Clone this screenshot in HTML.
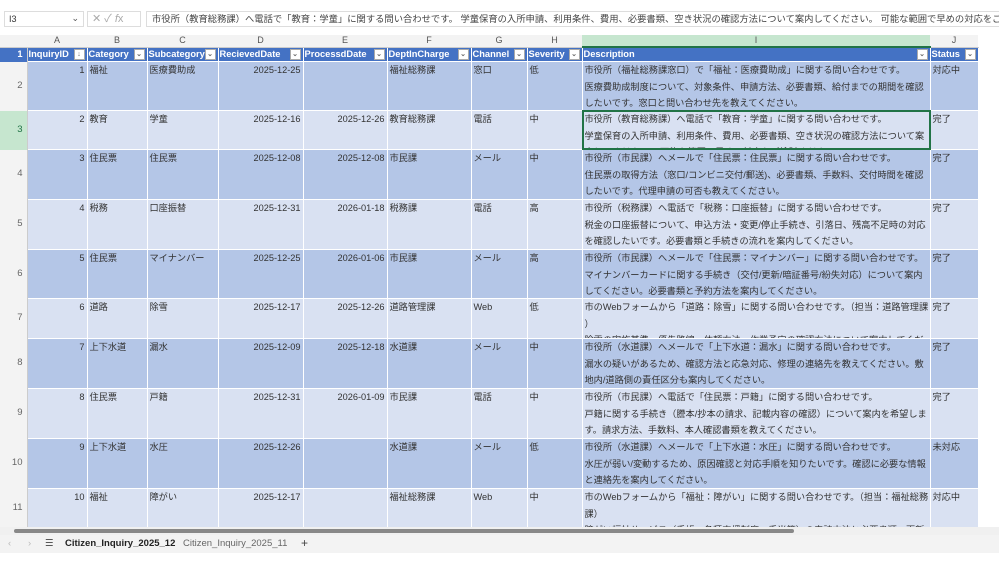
<!DOCTYPE html>
<html><head><meta charset="utf-8"><style>
*{margin:0;padding:0;box-sizing:border-box}
body{width:999px;height:562px;background:#fff;font-family:"Liberation Sans","Noto Sans CJK JP",sans-serif;color:#333;position:relative;overflow:hidden;font-size:9.2px}
.top{position:absolute;left:0;top:0;width:999px;height:34px;background:#fff}
.nb{position:absolute;left:4px;top:11px;width:80px;height:16px;border:1px solid #ddd;font-size:9px;padding:2px 4px}
.nb span{position:absolute;right:4px;top:1px;color:#555}
.fx{position:absolute;left:87px;top:11px;width:54px;height:16px;border:1px solid #ddd;color:#aaa;font-size:11px;padding-left:4px;line-height:14px}
.fb{position:absolute;left:146px;top:11px;width:860px;height:16px;border:1px solid #ddd;font-size:9.3px;padding-left:5px;line-height:14px;white-space:nowrap;overflow:hidden;color:#444}
.grid{position:absolute;left:0;top:35px}
table{border-collapse:collapse;table-layout:fixed;width:999px}
td{border:1px solid #fff;vertical-align:top;padding:0;white-space:nowrap}
td>div{overflow:hidden;padding:0 2px;line-height:16.5px}
.ch td{background:#f3f3f3;color:#555;text-align:center;font-size:9px;padding:0;border:none;border-bottom:1px solid #ccc}
.ch td>div{height:11px;line-height:11px}
.ch td.sel{background:#c6e6cf;border-bottom:2px solid #217346}
td.rh{background:#f3f3f3;color:#666;text-align:right;vertical-align:middle;font-size:9.5px;border:none;border-right:1px solid #ccc}
td.rh>div{display:flex;align-items:center;justify-content:flex-end;padding-right:4px}
.hd td{background:#4472c4;color:#fff;font-weight:bold;position:relative;font-size:9.3px}
.hd td>div{height:13px;line-height:13px;padding-left:1px}
.hd td i{position:absolute;right:2px;top:1px;width:11px;height:11px;background:#fff;border:1px solid #aaa;font-style:normal;color:#666;font-size:7px;line-height:9px;text-align:center}
.d td{background:#b4c6e7}
.l td{background:#d9e1f2}
td.r{text-align:right}
.d td.rh,.l td.rh{background:#f3f3f3}
td.w{background:#fff!important}
.h49>td>div{height:48px}.h50>td>div{height:49px}.h39>td>div{height:38px}.h40>td>div{height:39px}
.selc{position:absolute;left:582px;top:110px;width:349px;height:40px;border:2px solid #217346}
.sb{position:absolute;left:0;top:527px;width:999px;height:8px;background:#f0f0f0}
.sb div{position:absolute;left:14px;top:2px;width:780px;height:4px;background:#888;border-radius:2px}
.tabs{position:absolute;left:0;top:535px;width:999px;height:18px;background:#f3f3f3;font-size:9.5px;color:#444}
.tabs span{position:absolute;top:3px}
.bot{position:absolute;left:0;top:553px;width:999px;height:9px;background:#fff}
</style></head><body>
<div class="top">
<div class="nb">I3<span>⌄</span></div>
<div class="fx">✕ ✓ <i>f</i>x</div>
<div class="fb">市役所（教育総務課）へ電話で「教育：学童」に関する問い合わせです。 学童保育の入所申請、利用条件、費用、必要書類、空き状況の確認方法について案内してください。 可能な範囲で早めの対応をご検討ください。</div>
</div>
<div class="grid">
<table>
<colgroup><col style="width:27px"><col style="width:60px"><col style="width:60px"><col style="width:71px"><col style="width:85px"><col style="width:84px"><col style="width:84px"><col style="width:56px"><col style="width:55px"><col style="width:348px"><col style="width:48px"><col style="width:21px"></colgroup>
<tr class="ch"><td><div></div></td><td><div>A</div></td><td><div>B</div></td><td><div>C</div></td><td><div>D</div></td><td><div>E</div></td><td><div>F</div></td><td><div>G</div></td><td><div>H</div></td><td class="sel"><div>I</div></td><td><div>J</div></td><td style="background:#fff;border:none"><div></div></td></tr>
<tr class="hd"><td class="rh"><div style="height:13px">1</div></td><td><div>InquiryID</div><i>↓</i></td><td><div>Category</div><i>⌄</i></td><td><div>Subcategory</div><i>⌄</i></td><td><div>RecievedDate</div><i>⌄</i></td><td><div>ProcessdDate</div><i>⌄</i></td><td><div>DeptInCharge</div><i>⌄</i></td><td><div>Channel</div><i>⌄</i></td><td><div>Severity</div><i>⌄</i></td><td><div>Description</div><i>⌄</i></td><td><div>Status</div><i>⌄</i></td><td class="w"><div></div></td></tr>
<tr class="d h49"><td class="rh"><div>2</div></td><td class="r"><div>1</div></td><td><div>福祉</div></td><td><div>医療費助成</div></td><td class="r"><div>2025-12-25</div></td><td class="r"><div></div></td><td><div>福祉総務課</div></td><td><div>窓口</div></td><td><div>低</div></td><td><div>市役所（福祉総務課窓口）で「福祉：医療費助成」に関する問い合わせです。<br>医療費助成制度について、対象条件、申請方法、必要書類、給付までの期間を確認<br>したいです。窓口と問い合わせ先を教えてください。</div></td><td><div>対応中</div></td><td class="w"><div></div></td></tr>
<tr class="l h39"><td class="rh" style="background:#c6e6cf;color:#217346"><div>3</div></td><td class="r"><div>2</div></td><td><div>教育</div></td><td><div>学童</div></td><td class="r"><div>2025-12-16</div></td><td class="r"><div>2025-12-26</div></td><td><div>教育総務課</div></td><td><div>電話</div></td><td><div>中</div></td><td><div>市役所（教育総務課）へ電話で「教育：学童」に関する問い合わせです。<br>学童保育の入所申請、利用条件、費用、必要書類、空き状況の確認方法について案<br>内してください。 可能な範囲で早めの対応をご検討ください。</div></td><td><div>完了</div></td><td class="w"><div></div></td></tr>
<tr class="d h50"><td class="rh"><div>4</div></td><td class="r"><div>3</div></td><td><div>住民票</div></td><td><div>住民票</div></td><td class="r"><div>2025-12-08</div></td><td class="r"><div>2025-12-08</div></td><td><div>市民課</div></td><td><div>メール</div></td><td><div>中</div></td><td><div>市役所（市民課）へメールで「住民票：住民票」に関する問い合わせです。<br>住民票の取得方法（窓口/コンビニ交付/郵送)、必要書類、手数料、交付時間を確認<br>したいです。代理申請の可否も教えてください。</div></td><td><div>完了</div></td><td class="w"><div></div></td></tr>
<tr class="l h50"><td class="rh"><div>5</div></td><td class="r"><div>4</div></td><td><div>税務</div></td><td><div>口座振替</div></td><td class="r"><div>2025-12-31</div></td><td class="r"><div>2026-01-18</div></td><td><div>税務課</div></td><td><div>電話</div></td><td><div>高</div></td><td><div>市役所（税務課）へ電話で「税務：口座振替」に関する問い合わせです。<br>税金の口座振替について、申込方法・変更/停止手続き、引落日、残高不足時の対応<br>を確認したいです。必要書類と手続きの流れを案内してください。</div></td><td><div>完了</div></td><td class="w"><div></div></td></tr>
<tr class="d h49"><td class="rh"><div>6</div></td><td class="r"><div>5</div></td><td><div>住民票</div></td><td><div>マイナンバー</div></td><td class="r"><div>2025-12-25</div></td><td class="r"><div>2026-01-06</div></td><td><div>市民課</div></td><td><div>メール</div></td><td><div>高</div></td><td><div>市役所（市民課）へメールで「住民票：マイナンバー」に関する問い合わせです。<br>マイナンバーカードに関する手続き（交付/更新/暗証番号/紛失対応）について案内<br>してください。必要書類と予約方法を案内してください。</div></td><td><div>完了</div></td><td class="w"><div></div></td></tr>
<tr class="l h40"><td class="rh"><div>7</div></td><td class="r"><div>6</div></td><td><div>道路</div></td><td><div>除雪</div></td><td class="r"><div>2025-12-17</div></td><td class="r"><div>2025-12-26</div></td><td><div>道路管理課</div></td><td><div>Web</div></td><td><div>低</div></td><td><div>市のWebフォームから「道路：除雪」に関する問い合わせです。（担当：道路管理課<br>）<br>除雪の実施基準、優先路線、依頼方法、作業予定の確認方法について案内してくだ</div></td><td><div>完了</div></td><td class="w"><div></div></td></tr>
<tr class="d h50"><td class="rh"><div>8</div></td><td class="r"><div>7</div></td><td><div>上下水道</div></td><td><div>漏水</div></td><td class="r"><div>2025-12-09</div></td><td class="r"><div>2025-12-18</div></td><td><div>水道課</div></td><td><div>メール</div></td><td><div>中</div></td><td><div>市役所（水道課）へメールで「上下水道：漏水」に関する問い合わせです。<br>漏水の疑いがあるため、確認方法と応急対応、修理の連絡先を教えてください。敷<br>地内/道路側の責任区分も案内してください。</div></td><td><div>完了</div></td><td class="w"><div></div></td></tr>
<tr class="l h50"><td class="rh"><div>9</div></td><td class="r"><div>8</div></td><td><div>住民票</div></td><td><div>戸籍</div></td><td class="r"><div>2025-12-31</div></td><td class="r"><div>2026-01-09</div></td><td><div>市民課</div></td><td><div>電話</div></td><td><div>中</div></td><td><div>市役所（市民課）へ電話で「住民票：戸籍」に関する問い合わせです。<br>戸籍に関する手続き（謄本/抄本の請求、記載内容の確認）について案内を希望しま<br>す。請求方法、手数料、本人確認書類を教えてください。</div></td><td><div>完了</div></td><td class="w"><div></div></td></tr>
<tr class="d h50"><td class="rh"><div>10</div></td><td class="r"><div>9</div></td><td><div>上下水道</div></td><td><div>水圧</div></td><td class="r"><div>2025-12-26</div></td><td class="r"><div></div></td><td><div>水道課</div></td><td><div>メール</div></td><td><div>低</div></td><td><div>市役所（水道課）へメールで「上下水道：水圧」に関する問い合わせです。<br>水圧が弱い/変動するため、原因確認と対応手順を知りたいです。確認に必要な情報<br>と連絡先を案内してください。</div></td><td><div>未対応</div></td><td class="w"><div></div></td></tr>
<tr class="l h39"><td class="rh"><div>11</div></td><td class="r"><div>10</div></td><td><div>福祉</div></td><td><div>障がい</div></td><td class="r"><div>2025-12-17</div></td><td class="r"><div></div></td><td><div>福祉総務課</div></td><td><div>Web</div></td><td><div>中</div></td><td><div>市のWebフォームから「福祉：障がい」に関する問い合わせです。（担当：福祉総務<br>課）<br>障がい福祉サービス（手帳、各種支援制度、手当等）の申請方法と必要書類、更新</div></td><td><div>対応中</div></td><td class="w"><div></div></td></tr>
</table>
</div>
<div class="selc"></div>
<div class="sb"><div></div></div>
<div class="tabs">
<span style="left:8px;color:#bbb">‹</span><span style="left:28px;color:#bbb">›</span><span style="left:45px">☰</span>
<span style="left:65px;font-weight:bold;color:#222">Citizen_Inquiry_2025_12</span>
<span style="left:183px;color:#666">Citizen_Inquiry_2025_11</span>
<span style="left:301px;font-size:12px;top:1px">+</span>
</div>
<div class="bot"></div>
</body></html>
